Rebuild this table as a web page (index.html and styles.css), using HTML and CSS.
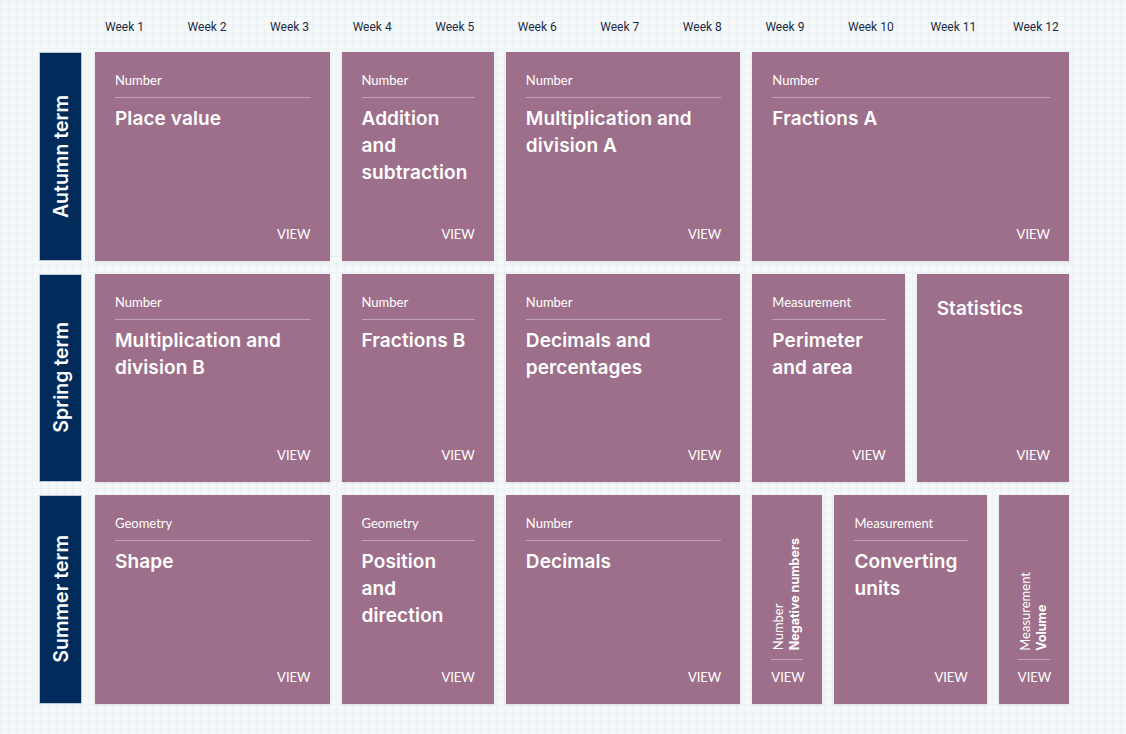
FILE: index.html
```html
<!DOCTYPE html>
<html lang="en">
<head>
<meta charset="utf-8">
<title>Year overview</title>
<link rel="stylesheet" href="styles.css">
</head>
<body>
<div class="page">
  <div class="weeks">
    <div>Week 1</div><div>Week 2</div><div>Week 3</div><div>Week 4</div>
    <div>Week 5</div><div>Week 6</div><div>Week 7</div><div>Week 8</div>
    <div>Week 9</div><div>Week 10</div><div>Week 11</div><div>Week 12</div>
  </div>
  <div class="terms">
    <div class="term">
      <div class="term-label"><span>Autumn term</span></div>
      <div class="blocks">
        <div class="card span3"><div class="cat">Number</div><div class="title">Place value</div><div class="view">VIEW</div></div>
        <div class="card span2"><div class="cat">Number</div><div class="title">Addition and subtraction</div><div class="view">VIEW</div></div>
        <div class="card span3"><div class="cat">Number</div><div class="title">Multiplication and division A</div><div class="view">VIEW</div></div>
        <div class="card span4"><div class="cat">Number</div><div class="title">Fractions A</div><div class="view">VIEW</div></div>
      </div>
    </div>
    <div class="term">
      <div class="term-label"><span>Spring term</span></div>
      <div class="blocks">
        <div class="card span3"><div class="cat">Number</div><div class="title">Multiplication and division B</div><div class="view">VIEW</div></div>
        <div class="card span2"><div class="cat">Number</div><div class="title">Fractions B</div><div class="view">VIEW</div></div>
        <div class="card span3"><div class="cat">Number</div><div class="title">Decimals and percentages</div><div class="view">VIEW</div></div>
        <div class="card span2"><div class="cat">Measurement</div><div class="title">Perimeter and area</div><div class="view">VIEW</div></div>
        <div class="card span2 nocat"><div class="title">Statistics</div><div class="view">VIEW</div></div>
      </div>
    </div>
    <div class="term">
      <div class="term-label"><span>Summer term</span></div>
      <div class="blocks">
        <div class="card span3"><div class="cat">Geometry</div><div class="title">Shape</div><div class="view">VIEW</div></div>
        <div class="card span2"><div class="cat">Geometry</div><div class="title">Position and direction</div><div class="view">VIEW</div></div>
        <div class="card span3"><div class="cat">Number</div><div class="title">Decimals</div><div class="view">VIEW</div></div>
        <div class="card narrow"><div class="vtext"><span class="vcat">Number</span><span class="vtitle">Negative numbers</span></div><div class="vline"></div><div class="view">VIEW</div></div>
        <div class="card span2"><div class="cat">Measurement</div><div class="title">Converting units</div><div class="view">VIEW</div></div>
        <div class="card narrow"><div class="vtext"><span class="vcat">Measurement</span><span class="vtitle">Volume</span></div><div class="vline"></div><div class="view">VIEW</div></div>
      </div>
    </div>
  </div>
</div>
</body>
</html>
```

FILE: styles.css
```css
* { box-sizing: border-box; }
html, body { margin: 0; padding: 0; }
body {
  width: 1126px;
  height: 734px;
  overflow: hidden;
  background-color: #f5f8f9;
  background-image:
    linear-gradient(to right, #edf2f4 1px, transparent 1px),
    linear-gradient(to bottom, #edf2f4 1px, transparent 1px);
  background-size: 8px 8px;
  font-family: "Lato", "Liberation Sans", sans-serif;
}
.page { padding-left: 39px; }
.weeks {
  display: grid;
  grid-template-columns: repeat(12, 82.55px);
  margin-left: 66px;
  height: 52px;
  padding-top: 2px;
  align-items: center;
  font-family: Roboto, "Liberation Sans", sans-serif;
  font-size: 12px;
  color: #1d2b45;
}
.terms { display: flex; flex-direction: column; gap: 13px; }
.term { display: flex; height: 208.5px; gap: 13px; }
.term-label {
  width: 43px;
  background: #002b5b;
  border: 1px solid #b9c7d6;
  display: flex;
  align-items: center;
  justify-content: center;
  color: #fff;
}
.term-label span {
  writing-mode: vertical-rl;
  transform: rotate(180deg);
  font-family: Inter, "Liberation Sans", sans-serif;
  font-weight: 600;
  font-size: 19.5px;
}
.blocks {
  width: 974px;
  height: 100%;
  display: grid;
  grid-template-columns: repeat(12, 1fr);
  grid-template-rows: 100%;
  column-gap: 12px;
}
.card {
  background: #9e6f8a;
  color: #fff;
  padding: 20px 20px 19px 20px;
  display: flex;
  flex-direction: column;
  min-height: 0;
  overflow: hidden;
  box-shadow: 0 1px 3px rgba(40, 50, 70, 0.12);
}
.span2 { grid-column: span 2; }
.span3 { grid-column: span 3; }
.span4 { grid-column: span 4; }
.cat {
  font-size: 13px;
  line-height: 16px;
  padding-bottom: 9px;
  border-bottom: 1px solid rgba(255, 255, 255, 0.35);
  margin-right: -1px;
}
.title {
  margin-top: 7px;
  font-family: Inter, "Liberation Sans", sans-serif;
  font-size: 19px;
  font-weight: 600;
  line-height: 27px;
  letter-spacing: 0.1px;
}
.nocat .title { margin-top: 1px; }
.view {
  margin-top: auto;
  text-align: right;
  font-size: 13px;
  line-height: 16px;
  margin-right: -1px;
}
.narrow { padding: 20px 19px 19px 19px; justify-content: flex-end; }
.vtext {
  writing-mode: vertical-rl;
  transform: rotate(180deg);
  display: flex;
  flex-direction: column;
  gap: 3px;
  line-height: 14px;
}
.vcat { font-size: 13px; }
.vtitle {
  font-family: Inter, "Liberation Sans", sans-serif;
  font-size: 12.5px;
  font-weight: 700;
}
.vline {
  margin-top: 8px;
  border-top: 1px solid rgba(255, 255, 255, 0.35);
}
.narrow .view { margin-top: 9px; text-align: left; margin-right: 0; }
```
